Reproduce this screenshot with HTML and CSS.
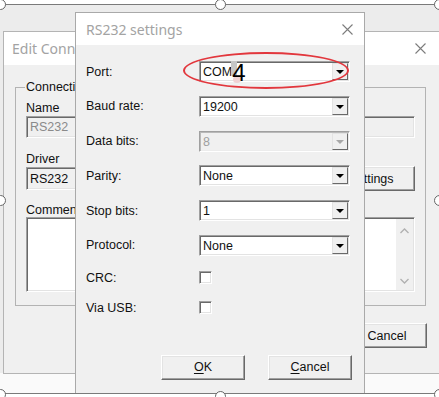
FILE: index.html
```html
<!DOCTYPE html>
<html lang="en">
<head>
  <meta charset="UTF-8">
  <meta name="viewport" content="width=device-width, initial-scale=1.0">
  <title>RS232 settings</title>
  <link rel="stylesheet" href="styles.css">
</head>
<body>
  <div class="page">
    <div class="shot">

      <!-- window behind -->
      <div class="win edit">
        <div class="titlebar">
          <span class="title">Edit Connection</span>
          <svg class="close" width="11" height="11" viewBox="0 0 11 11"><path d="M0.5 0.5L10.5 10.5M10.5 0.5L0.5 10.5"/></svg>
        </div>
        <div class="edit-body">
          <fieldset class="group">
            <legend>Connection</legend>
            <div class="lbl">Name</div>
            <div class="field ro">RS232</div>
            <div class="lbl lbl-gap">Driver</div>
            <div class="driver-row">
              <div class="field driver">RS232</div>
              <button class="btn settings">Settings</button>
            </div>
            <div class="lbl lbl-gap2">Comment</div>
            <div class="memo">
              <div class="vscroll">
                <svg width="9" height="6" viewBox="0 0 9 6"><path d="M0.5 5L4.5 1L8.5 5"/></svg>
                <svg width="9" height="6" viewBox="0 0 9 6"><path d="M0.5 1L4.5 5L8.5 1"/></svg>
              </div>
            </div>
          </fieldset>
          <div class="foot">
            <button class="btn wide">OK</button>
            <button class="btn wide">Cancel</button>
          </div>
        </div>
      </div>

      <!-- dialog in front -->
      <div class="win rs">
        <div class="titlebar">
          <span class="title">RS232 settings</span>
          <svg class="close" width="11" height="11" viewBox="0 0 11 11"><path d="M0.5 0.5L10.5 10.5M10.5 0.5L0.5 10.5"/></svg>
        </div>
        <div class="rs-body">
          <div class="form">
            <label>Port:</label>
            <div class="combo">
              <span class="val">COM<span class="typed">4</span></span>
              <span class="caret"></span>
              <span class="blob"></span>
              <span class="drop"></span>
            </div>

            <label>Baud rate:</label>
            <div class="combo"><span class="val">19200</span><span class="drop"></span></div>

            <label>Data bits:</label>
            <div class="combo off"><span class="val">8</span><span class="drop"></span></div>

            <label>Parity:</label>
            <div class="combo"><span class="val">None</span><span class="drop"></span></div>

            <label>Stop bits:</label>
            <div class="combo"><span class="val">1</span><span class="drop"></span></div>

            <label>Protocol:</label>
            <div class="combo"><span class="val">None</span><span class="drop"></span></div>

            <label>CRC:</label>
            <div class="check"></div>

            <label>Via USB:</label>
            <div class="check"></div>
          </div>
          <div class="buttons">
            <button class="btn dlg"><u>O</u>K</button>
            <button class="btn dlg"><u>C</u>ancel</button>
          </div>
        </div>
        <div class="ring"></div>
      </div>
    </div>

    <!-- selection handles of the picture -->
    <span class="handle h-tl"></span>
    <span class="handle h-tm"></span>
    <span class="handle h-tr"></span>
    <span class="handle h-ml"></span>
    <span class="handle h-mr"></span>
    <span class="handle h-bl"></span>
    <span class="handle h-bm"></span>
    <span class="handle h-br"></span>
  </div>
</body>
</html>
```

FILE: styles.css
```css
body {
  margin: 0;
  background: #fff;
  font-family: "Liberation Sans", Arial, sans-serif;
  font-size: 12.5px;
  color: #111;
}
.page {
  position: relative;
  width: 439px;
  height: 397px;
  overflow: hidden;
}
.shot {
  position: absolute;
  top: 4px;
  left: 0;
  width: 439px;
  height: 388px;
  border-top: 1px solid #7a7a7a;
  border-bottom: 1px solid #7a7a7a;
  background: linear-gradient(#ececec 0 368px, #fafafa 368px);
  overflow: hidden;
}

/* windows */
.win {
  position: absolute;
  box-sizing: border-box;
  border: 1px solid #b4b4b4;
  background: #f0f0f0;
}
.titlebar {
  display: flex;
  align-items: center;
  justify-content: space-between;
  background: #fff;
  font-family: "Noto Sans", sans-serif;
  font-size: 14px;
  color: #a3a3a3;
}
.close path {
  stroke: #7c7c7c;
  stroke-width: 1.1;
  fill: none;
}
.edit {
  left: 3px;
  top: 26px;
  width: 452px;
  height: 343px;
}
.edit .titlebar {
  height: 33px;
  padding: 0 28px 0 8px;
}
.rs {
  left: 75px;
  top: 7px;
  width: 290px;
  height: 392px;
  border-color: #a9a9a9;
}
.rs .titlebar {
  height: 32px;
  padding: 0 11px 0 10px;
}

/* edit connection contents */
.edit-body {
  padding: 15px 28px 0 11px;
}
.group {
  margin: 0;
  padding: 6px 10px 13px 10px;
  border: 1px solid #b3b3b3;
  min-width: 0;
}
.group legend {
  margin-left: -1px;
  padding: 0 1px;
  line-height: 15px;
}
.lbl {
  line-height: 14px;
  height: 14px;
}
.lbl-gap {
  margin-top: 14px;
}
.lbl-gap2 {
  margin-top: 12px;
}
.field {
  box-sizing: border-box;
  height: 22px;
  margin-top: 1px;
  padding: 3px 0 0 3px;
  border: 1px solid;
  border-color: #a0a0a0 #fff #fff #a0a0a0;
  box-shadow: inset 1px 1px #696969, inset -1px -1px #e3e3e3;
  background: #f0f0f0;
}
.field.ro {
  color: #8a8a8a;
}
.driver-row {
  display: flex;
  align-items: center;
  justify-content: space-between;
  height: 25px;
}
.field.driver {
  width: 300px;
  height: 23px;
  margin-top: 0;
  padding-top: 4px;
}
.memo {
  display: flex;
  justify-content: flex-end;
  box-sizing: border-box;
  height: 75px;
  border: 1px solid;
  border-color: #a0a0a0 #fff #fff #a0a0a0;
  box-shadow: inset 1px 1px #696969, inset -1px -1px #e3e3e3;
  background: #fff;
}
.vscroll {
  display: flex;
  flex-direction: column;
  justify-content: space-between;
  align-items: center;
  width: 17px;
  margin: 1px 1px 1px 0;
  padding: 9px 0 6px;
  box-sizing: border-box;
  background: #f0f0f0;
}
.vscroll path {
  stroke: #b0b0b0;
  stroke-width: 1.3;
  fill: none;
}
.foot {
  display: flex;
  justify-content: flex-end;
  gap: 8px;
  margin: 17px -1px 0 0;
}

/* buttons */
.btn {
  box-sizing: border-box;
  height: 25px;
  padding: 0;
  font: inherit;
  color: #111;
  background: #f0f0f0;
  border: 1px solid;
  border-color: #fff #696969 #696969 #fff;
  box-shadow: inset -1px -1px #a0a0a0, inset 1px 1px #e3e3e3;
}
.btn.settings {
  width: 88px;
}
.btn.wide {
  width: 80px;
}
.btn.dlg {
  width: 84px;
}
.btn u {
  text-decoration-thickness: 1px;
  text-underline-offset: 2px;
}

/* rs232 contents */
.rs-body {
  padding: 16px 12px 0 10px;
}
.form {
  display: grid;
  grid-template-columns: 113px 151px;
  grid-template-rows: repeat(6, 21px) 16px 16px;
  row-gap: 13.8px;
  align-items: center;
}
.form label {
  line-height: 14px;
}
.combo {
  position: relative;
  display: flex;
  height: 21px;
  box-sizing: border-box;
  border: 1px solid;
  border-color: #a0a0a0 #fff #fff #a0a0a0;
  box-shadow: inset 1px 1px #696969, inset -1px -1px #e3e3e3;
  background: #fff;
}
.combo .val {
  flex: 1;
  padding: 3px 0 0 3px;
  line-height: 14px;
}
.combo .drop {
  display: flex;
  align-items: center;
  justify-content: center;
  width: 16px;
  margin: 1px 1px 1px 0;
  box-sizing: border-box;
  background: #f0f0f0;
  border: 1px solid;
  border-color: #e3e3e3 #696969 #696969 #e3e3e3;
}
.combo .drop::before {
  content: "";
  border-left: 4px solid transparent;
  border-right: 4px solid transparent;
  border-top: 4px solid #000;
  margin-top: 1px;
}
.combo.off {
  background: #f0f0f0;
  box-shadow: inset 1px 1px #b9b9b9, inset -1px -1px #ececec;
}
.combo.off .val {
  color: #a0a0a0;
}
.combo.off .drop::before {
  border-top-color: #a8a8a8;
}
.typed {
  position: relative;
  z-index: 1;
  font-size: 24px;
  line-height: 14px;
  color: #000;
  vertical-align: -5px;
}
.caret {
  position: absolute;
  left: 31px;
  top: -1px;
  width: 6px;
  height: 15px;
  background: #c6c6c6;
}
.blob {
  position: absolute;
  left: 33px;
  top: 14px;
  width: 8px;
  height: 7px;
  border-radius: 50%;
  background: #efd2d4;
}
.check {
  box-sizing: border-box;
  width: 13px;
  height: 13px;
  border: 1px solid;
  border-color: #a0a0a0 #fff #fff #a0a0a0;
  box-shadow: inset 1px 1px #696969, inset -1px -1px #e3e3e3;
  background: #fff;
}
.buttons {
  display: flex;
  justify-content: flex-end;
  gap: 23px;
  margin-top: 39px;
}

/* red annotation */
.ring {
  position: absolute;
  left: 107px;
  top: 39px;
  width: 166px;
  height: 37px;
  box-sizing: border-box;
  border: 2px solid #e2373d;
  border-radius: 50%;
}

/* picture selection handles */
.handle {
  position: absolute;
  width: 9px;
  height: 9px;
  margin: -5px 0 0 -5px;
  border: 1px solid #666;
  border-radius: 50%;
  background: #fff;
}
.h-tl { left: 0; top: 4px; }
.h-tm { left: 220px; top: 4px; }
.h-tr { left: 439px; top: 4px; }
.h-ml { left: 0; top: 200px; }
.h-mr { left: 439px; top: 200px; }
.h-bl { left: 0; top: 394px; }
.h-bm { left: 220px; top: 396px; }
.h-br { left: 439px; top: 394px; }
```
